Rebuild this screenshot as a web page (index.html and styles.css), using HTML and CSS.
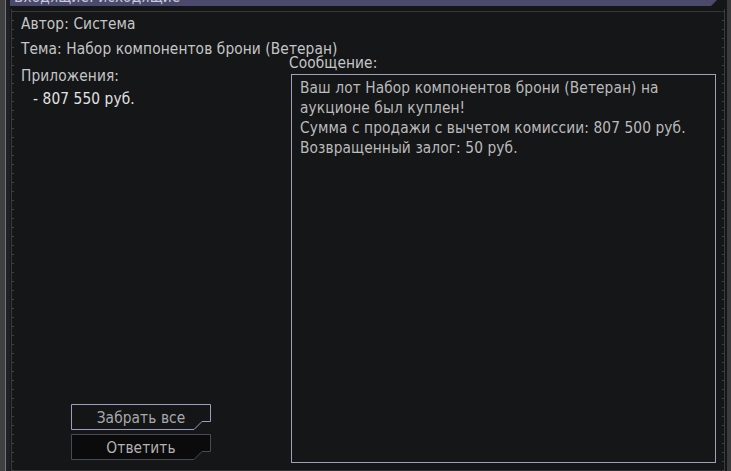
FILE: index.html
```html
<!DOCTYPE html>
<html lang="ru">
<head>
<meta charset="utf-8">
<title>Почта</title>
<link rel="stylesheet" href="styles.css">
</head>
<body>
<div class="rail-left"></div>
<div class="main">
  <div class="tab"><span class="tab-text">Входящие: исходящие</span></div>
  <div class="frame">
    <div class="ruler ruler-l"></div>
    <div class="content">
      <div class="meta-row">Автор: Система</div>
      <div class="meta-row">Тема: Набор компонентов брони (Ветеран)</div>
      <div class="body-area">
        <div class="col-left">
          <div class="label attach-label">Приложения:</div>
          <div class="attach-value">- 807 550 руб.</div>
          <div class="buttons">
            <button class="btn btn-primary">
              <svg class="btn-shape" width="140" height="26" viewBox="0 0 140 26"><path d="M0.5 0.5H139.5V17.5H131L123 25.5H0.5Z"/></svg>
              <span class="btn-label">Забрать все</span>
            </button>
            <button class="btn btn-secondary">
              <svg class="btn-shape" width="140" height="26" viewBox="0 0 140 26"><path d="M0.5 0.5H139.5V17.5H131L123 25.5H0.5Z"/></svg>
              <span class="btn-label">Ответить</span>
            </button>
          </div>
        </div>
        <div class="col-right">
          <div class="label msg-label">Сообщение:</div>
          <div class="msg-box">Ваш лот Набор компонентов брони (Ветеран) на аукционе был куплен!<br>Сумма с продажи с вычетом комиссии: 807 500 руб.<br>Возвращенный залог: 50 руб.</div>
        </div>
      </div>
    </div>
    <div class="ruler ruler-r"></div>
  </div>
</div>
<div class="rail-right"></div>
</body>
</html>
```
FILE: styles.css
```css
* { box-sizing: border-box; }
html, body { height: 100%; }
body {
  margin: 0;
  width: 731px;
  height: 471px;
  overflow: hidden;
  display: flex;
  background: #151618;
  color: #c6c6c6;
  font-family: "DejaVu Sans Condensed", "DejaVu Sans", sans-serif;
  font-size: 15.3px;
  letter-spacing: 0.1px;
}
.rail-left {
  width: 10px;
  flex: none;
  background: linear-gradient(to right, #404040 0 5px, #6c7588 5px 6px, #1f2023 6px 10px);
}
.rail-right {
  width: 4px;
  flex: none;
  background: #3b3b3c;
}
.main {
  flex: 1;
  display: flex;
  flex-direction: column;
  min-width: 0;
}
.tab {
  height: 6px;
  flex: none;
  margin-right: 10px;
  background: #4b4a6c;
  clip-path: polygon(0 0, 100% 0, calc(100% - 6px) 100%, 0 100%);
  overflow: hidden;
  padding-left: 4px;
}
.tab-text {
  display: block;
  margin-top: -11px;
  line-height: 17px;
  color: #c8c8dc;
  white-space: nowrap;
}
.frame {
  flex: 1;
  display: flex;
  padding-top: 3px;
  min-height: 0;
}
.ruler {
  flex: none;
  background-repeat: no-repeat, repeat-y;
}
.ruler-l {
  width: 4px;
  background-image:
    linear-gradient(to right, transparent 1px, #3a3a3b 1px 2px, transparent 2px),
    repeating-linear-gradient(to bottom, transparent 0 2px, #3e3e40 2px 3px, transparent 3px 9px);
  background-size: 100% 100%, 4px 100%;
  background-position: 0 0, 1px 0;
}
.ruler-r {
  width: 6px;
  background-image:
    linear-gradient(to right, transparent 3px, #3a3a3b 3px 4px, transparent 4px),
    repeating-linear-gradient(to bottom, transparent 0 2px, #3e3e40 2px 3px, transparent 3px 9px);
  background-size: 100% 100%, 3px 100%;
  background-position: 0 0, 1px 0;
}
.content {
  flex: 1;
  display: flex;
  flex-direction: column;
  margin-top: 2px;
  border-top: 1px solid #38383a;
  border-bottom: 1px solid #2f3032;
  padding-left: 7px;
  padding-right: 5px;
  min-width: 0;
}
.meta-row {
  line-height: 25px;
  white-space: nowrap;
}
.body-area {
  flex: 1;
  display: flex;
  min-height: 0;
}
.col-left {
  width: 268px;
  flex: none;
  display: flex;
  flex-direction: column;
  padding-top: 2px;
  padding-bottom: 10px;
}
.label { color: #c6c6c6; }
.attach-label { line-height: 24px; margin-bottom: -1px; }
.attach-value {
  line-height: 24px;
  padding-left: 12px;
  color: #e2e2e2;
}
.buttons {
  margin-top: auto;
  padding-left: 50px;
  display: flex;
  flex-direction: column;
  gap: 4px;
}
.btn {
  position: relative;
  width: 140px;
  height: 26px;
  padding: 1px 0 0;
  border: 0;
  background: none;
  font: inherit;
  letter-spacing: inherit;
  line-height: 26px;
  text-align: center;
  cursor: pointer;
}
.btn-shape {
  position: absolute;
  left: 0;
  top: 0;
}
.btn-label { position: relative; }
.btn-primary .btn-shape path { fill: #141517; stroke: #9d9dbd; stroke-width: 1; }
.btn-primary { color: #a9a9ab; }
.btn-secondary .btn-shape path { fill: #0b0b0c; stroke: #4a4a55; stroke-width: 1; }
.btn-secondary { color: #b2b2b2; }
.col-right {
  flex: 1;
  display: flex;
  flex-direction: column;
  margin-top: -7px;
  padding-bottom: 7px;
  min-width: 0;
}
.msg-label {
  line-height: 16px;
  height: 16px;
  margin-bottom: 3px;
}
.msg-box {
  flex: 1;
  margin-left: 2px;
  border: 1px solid #a0a0b6;
  padding: 3px 8px 0 8px;
  line-height: 20px;
  color: #bbbbbb;
}
```
